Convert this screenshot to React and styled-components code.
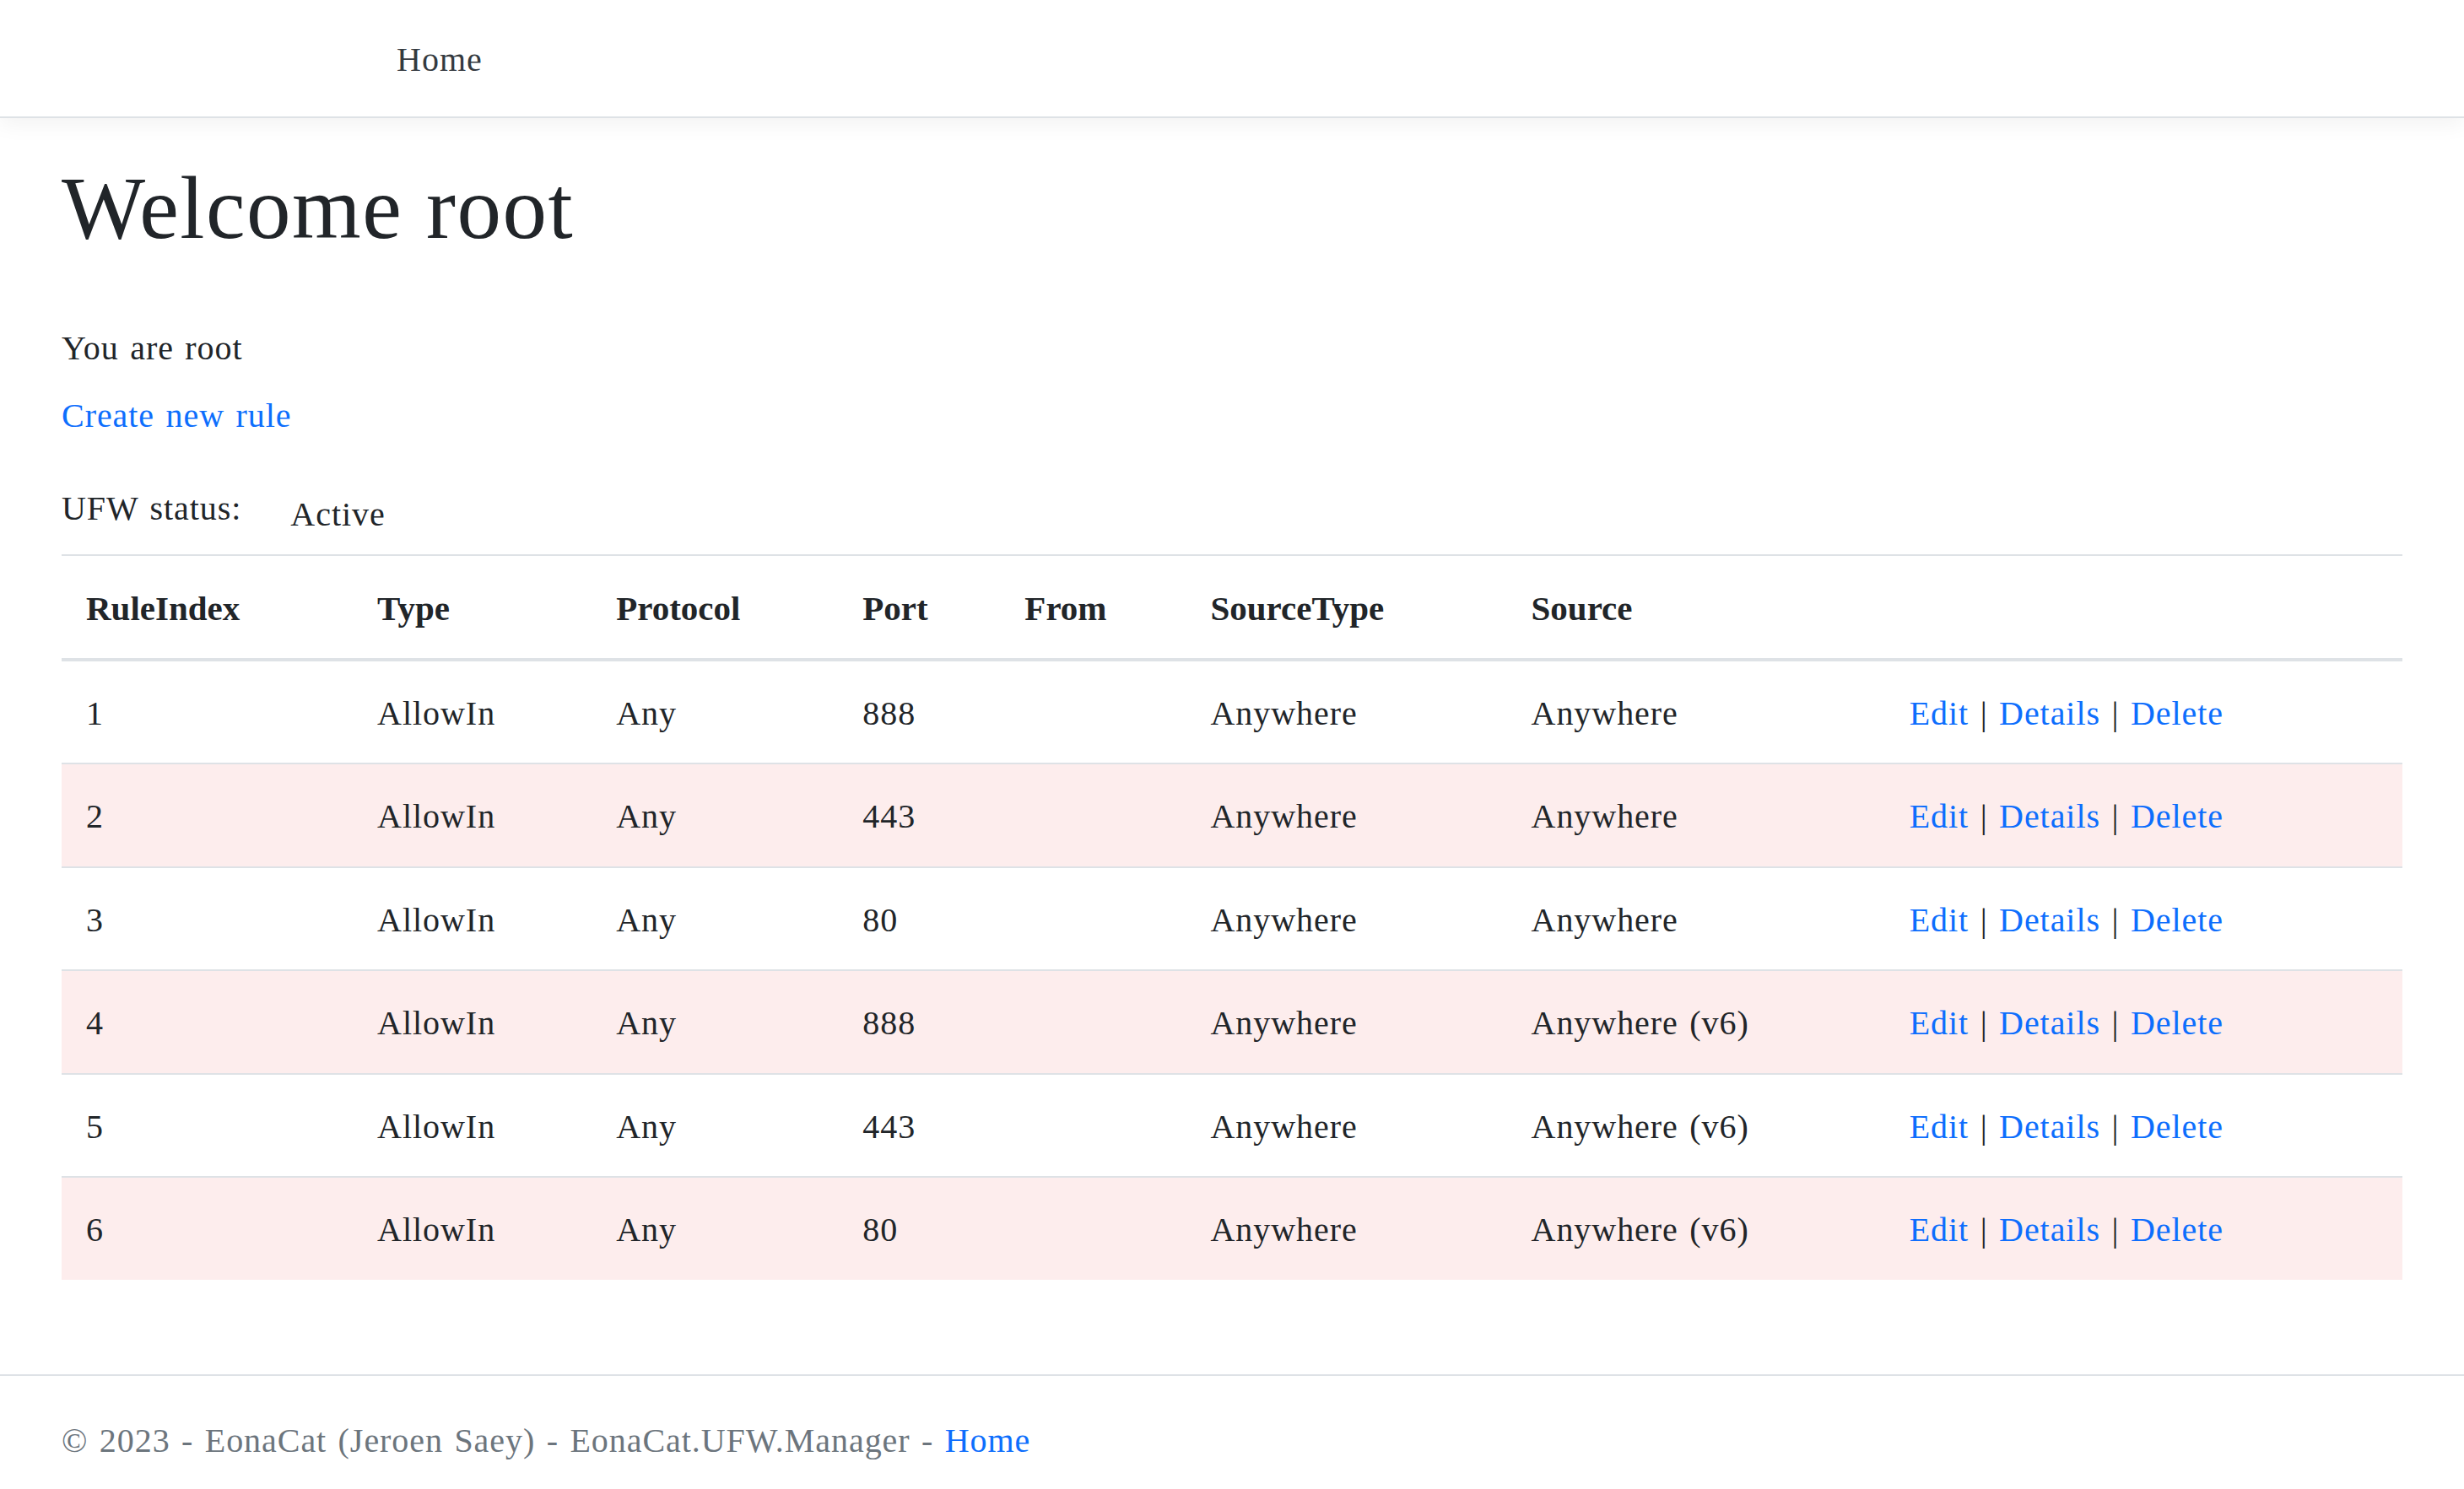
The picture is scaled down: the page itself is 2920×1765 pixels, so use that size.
import React from "react";
import styled, { createGlobalStyle } from "styled-components";

const rules = [
  { index: 1, type: "AllowIn", protocol: "Any", port: "888", from: "", sourceType: "Anywhere", source: "Anywhere" },
  { index: 2, type: "AllowIn", protocol: "Any", port: "443", from: "", sourceType: "Anywhere", source: "Anywhere" },
  { index: 3, type: "AllowIn", protocol: "Any", port: "80", from: "", sourceType: "Anywhere", source: "Anywhere" },
  { index: 4, type: "AllowIn", protocol: "Any", port: "888", from: "", sourceType: "Anywhere", source: "Anywhere (v6)" },
  { index: 5, type: "AllowIn", protocol: "Any", port: "443", from: "", sourceType: "Anywhere", source: "Anywhere (v6)" },
  { index: 6, type: "AllowIn", protocol: "Any", port: "80", from: "", sourceType: "Anywhere", source: "Anywhere (v6)" },
];

const columns = [
  { label: "RuleIndex", width: 345 },
  { label: "Type", width: 283 },
  { label: "Protocol", width: 292 },
  { label: "Port", width: 192 },
  { label: "From", width: 220 },
  { label: "SourceType", width: 380 },
  { label: "Source", width: 448 },
  { label: "", width: 613 },
];

const App = () => {
  return (
    <>
      <GlobalStyle />
      <Navbar>
        <NavList>
          <NavLink href="#">Home</NavLink>
        </NavList>
      </Navbar>

      <Main>
        <Title>Welcome root</Title>
        <Text>You are root</Text>
        <Paragraph>
          <Link href="#">Create new rule</Link>
        </Paragraph>

        <StatusRow>
          <StatusLabel>UFW status:</StatusLabel>
          <StatusValue>Active</StatusValue>
        </StatusRow>

        <Table>
          <colgroup>
            {columns.map((col, i) => (
              <col key={i} style={{ width: col.width }} />
            ))}
          </colgroup>
          <thead>
            <tr>
              {columns.map((col, i) => (
                <HeadCell key={i}>{col.label}</HeadCell>
              ))}
            </tr>
          </thead>
          <tbody>
            {rules.map((rule, i) => (
              <Row key={rule.index} $striped={i % 2 === 1} $last={i === rules.length - 1}>
                <Cell>{rule.index}</Cell>
                <Cell>{rule.type}</Cell>
                <Cell>{rule.protocol}</Cell>
                <Cell>{rule.port}</Cell>
                <Cell>{rule.from}</Cell>
                <Cell>{rule.sourceType}</Cell>
                <Cell>{rule.source}</Cell>
                <Cell>
                  <Link href="#">Edit</Link> | <Link href="#">Details</Link> |{" "}
                  <Link href="#">Delete</Link>
                </Cell>
              </Row>
            ))}
          </tbody>
        </Table>
      </Main>

      <Footer>
        <FooterText>
          © 2023 - EonaCat (Jeroen Saey) - EonaCat.UFW.Manager - <Link href="#">Home</Link>
        </FooterText>
      </Footer>
    </>
  );
};

const GlobalStyle = createGlobalStyle`
  html, body {
    margin: 0;
    padding: 0;
    background: #fff;
  }
  body {
    font-family: "Liberation Serif", "Times New Roman", serif;
    font-size: 40px;
    line-height: 1.5;
    color: #212529;
    letter-spacing: 0.95px;
    word-spacing: 2.5px;
  }
  * {
    box-sizing: border-box;
  }
`;

const Navbar = styled.nav`
  display: flex;
  align-items: center;
  height: 140px;
  padding: 0 73px;
  border-bottom: 2px solid #dee2e6;
  box-shadow: 0 8px 24px rgba(0, 0, 0, 0.05);
  background: #fff;
`;

const NavList = styled.div`
  display: flex;
  margin-left: 397px;
  padding-top: 3px;
`;

const NavLink = styled.a`
  color: #343a40;
  font-size: 40px;
  letter-spacing: 1px;
  text-decoration: none;
`;

const Main = styled.main`
  padding: 44px 73px 0;
`;

const Title = styled.h1`
  margin: 0 0 73px;
  font-size: 105px;
  font-weight: 400;
  line-height: 1.2;
  letter-spacing: 1.5px;
  word-spacing: 0;
`;

const Text = styled.p`
  margin: 0 0 20px;
`;

const Paragraph = styled.p`
  margin: 0 0 50px;
`;

const Link = styled.a`
  color: #0d6efd;
  text-decoration: none;
`;

const StatusRow = styled.div`
  display: flex;
  align-items: flex-start;
  gap: 58px;
  margin-bottom: 17px;
`;

const StatusLabel = styled.span``;

const StatusValue = styled.span`
  padding-top: 7px;
`;

const Table = styled.table`
  width: 100%;
  table-layout: fixed;
  border-collapse: collapse;
  border-top: 2px solid #dee2e6;
`;

const HeadCell = styled.th`
  padding: 32px 29px 27px;
  text-align: left;
  font-weight: 700;
  font-size: 41px;
  line-height: 1.5;
  letter-spacing: 0;
  word-spacing: 0;
  vertical-align: bottom;
  border-bottom: 4px solid #dee2e6;
`;

const Row = styled.tr`
  background: ${(p) => (p.$striped ? "#fdeded" : "#fff")};
  border-bottom: ${(p) => (p.$last ? "none" : "2px solid #dee2e6")};
`;

const Cell = styled.td`
  padding: 32px 29px 28.5px;
  line-height: 60px;
  white-space: nowrap;
`;

const Footer = styled.footer`
  margin-top: 112px;
  border-top: 2px solid #dee2e6;
  padding: 47px 73px 0;
  height: 137px;
`;

const FooterText = styled.div`
  color: #6c757d;
`;

export default App;
